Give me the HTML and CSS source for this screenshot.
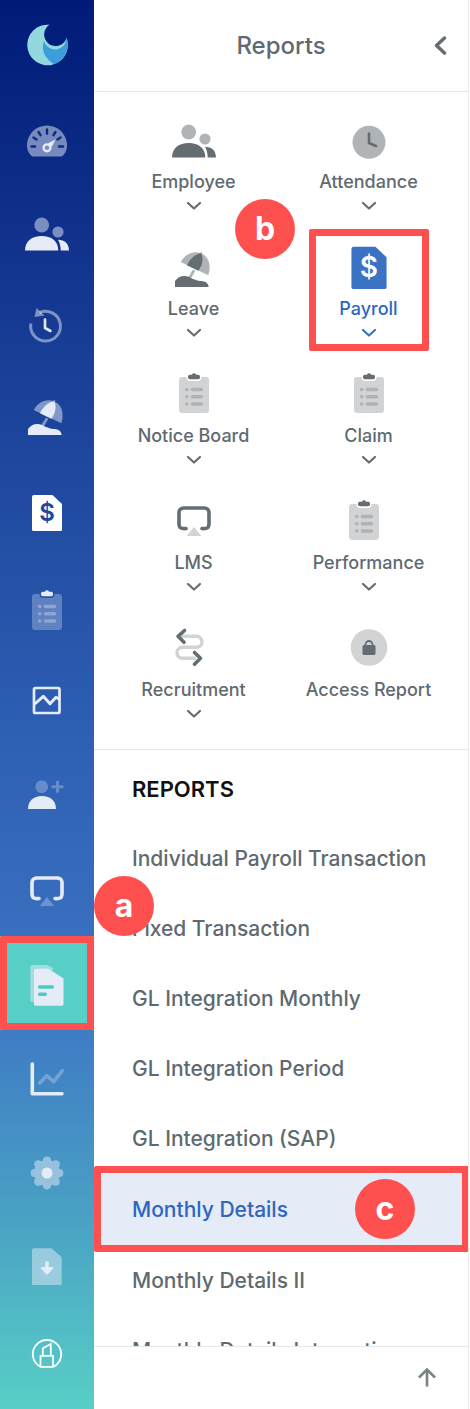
FILE: index.html
```
<!DOCTYPE html>
<html lang="en">
<head>
  <meta charset="UTF-8">
  <meta name="viewport" content="width=device-width, initial-scale=1.0">
  <title>Reports</title>
  <link rel="stylesheet" href="styles.css">
</head>
<body>
  <!-- Shared icons -->
  <svg class="sprite" aria-hidden="true">
    <g id="people">
      <circle class="soft" cx="18.7" cy="14" r="7.4"/>
      <circle class="soft" cx="35" cy="21" r="5.6"/>
      <path class="solid" d="M2 39.5C2 30 9 25 18.7 25s16.6 5 16.6 14.5z"/>
      <path class="solid" d="M35 28.8c6.500 0 11 4 11 10.700h-8.300c0-4.200-1-7.700-2.700-10.700z"/>
    </g>
    <g id="beach">
      <path class="soft" d="M23 24.500l2.300 1.200-4.500 8-2.800-1.200z"/>
      <path class="soft" d="M10.700 17C16 8 24 6 30.500 8l.5-1.200 1.300.6-.3 1.300C39 12 41.500 21 38.300 30.300z"/>
      <path class="solid" d="M17 20.200C20 13.500 26 8.800 31 8.200c3 5 1.500 12-2.700 17.600z"/>
      <path class="solid" d="M5 42v-6c3-4.500 9-6.500 14-4 5 2.500 7.500 3.800 12.500 4 4 .2 6.700 2 7.200 6z"/>
    </g>
    <path id="bill" class="solid" d="M11 6h18.500L39 15v25.500a1.500 1.500 0 0 1-1.500 1.500h-27A1.500 1.500 0 0 1 9 40.500V8a2 2 0 0 1 2-2z"/>
    <g id="clipboard">
      <path class="sheet" d="M12 8h4.500a4 4 0 0 0 4 4h7a4 4 0 0 0 4-4H36a3 3 0 0 1 3 3v30a3 3 0 0 1-3 3H12a3 3 0 0 1-3-3V11a3 3 0 0 1 3-3z"/>
      <path class="rows" d="M16.700 20.500h.1M22.500 20.500h9M16.700 27.800h.1M22.500 27.800h9M16.700 35h.1M22.500 35h9"/>
      <path class="clip" d="M19.800 5.800H22a2.100 2.100 0 0 1 4 0h2.200a1.800 1.800 0 0 1 1.800 1.800v.8a1.800 1.800 0 0 1-1.800 1.800h-8.400A1.800 1.800 0 0 1 18 8.400v-.8a1.800 1.800 0 0 1 1.800-1.800z"/>
    </g>
    <g id="screen">
      <path class="line" stroke-width="3.600" d="M16 33.500c-5 .5-7-.5-7-5V17.500a4.500 4.500 0 0 1 4.500-4.500h21a4.500 4.500 0 0 1 4.500 4.500v11c0 4.500-2 5.500-7 5"/>
      <path class="faint" d="M24 32l7.300 9H16.700z"/>
    </g>
    <path id="caret" class="line" stroke-width="2.200" d="M2 4l6 5.500L14 4"/>
  </svg>

  <div class="app">
    <nav class="sidebar" aria-label="Main">
      <a class="logo" href="#" aria-label="Home">
        <svg class="icon" viewBox="0 0 48 48">
          <path fill="#93d8de" d="M26.500 3.800A20.300 20.300 0 1 0 43.600 17 11.500 11.500 0 1 1 26.500 3.800z"/>
          <path fill="#3b9edb" d="M21 20a11.500 11.500 0 0 0 22.600-3A20.300 20.300 0 0 1 31 43.200C21 37 18 28 21 20z"/>
        </svg>
      </a>
      <a class="nav-item" href="#" aria-label="Dashboard">
        <svg class="icon" viewBox="0 -5 48 48">
          <path class="soft" d="M9.500 38.500C6 36.500 4 32 4 27.500a20 20 0 0 1 40 0c0 4.500-2 9-5.500 11z"/>
          <path class="ticks" d="M8.500 28.500h3.500M36 28.500h4M10.500 19.500l3 2M15.500 14l2 3.200M24 11.500v4M32.500 14l-2 3.200M37.500 19.500l-3 2"/>
          <path class="solid" d="M32.500 21.500l-3.600 7.200-3.800-3.500z"/>
          <circle class="line" stroke-width="2.400" cx="24" cy="29.800" r="3.400"/>
        </svg>
      </a>
      <a class="nav-item" href="#" aria-label="Employee">
        <svg class="icon" viewBox="0 -4 48 48"><use href="#people"/></svg>
      </a>
      <a class="nav-item" href="#" aria-label="Attendance">
        <svg class="icon" viewBox="0 0 48 48">
          <path class="line half" stroke-width="3" d="M7.900 22.500A14.900 14.900 0 1 0 16.500 11.600"/>
          <path class="soft" d="M13.500 7l8 7.500-10 1.500z"/>
          <path class="line" stroke-width="2.600" d="M22 18.500v8.500l5.500 3"/>
        </svg>
      </a>
      <a class="nav-item" href="#" aria-label="Leave">
        <svg class="icon" viewBox="0 2 48 48"><use href="#beach"/></svg>
      </a>
      <a class="nav-item current" href="#" aria-label="Payroll">
        <svg class="icon" viewBox="0 0 48 48">
          <use href="#bill"/>
          <text class="currency" x="24" y="32" text-anchor="middle">$</text>
        </svg>
      </a>
      <a class="nav-item" href="#" aria-label="Claim">
        <svg class="icon" viewBox="0 -3 48 48"><use href="#clipboard"/></svg>
      </a>
      <a class="nav-item" href="#" aria-label="Performance">
        <svg class="icon" viewBox="0 0 48 48">
          <rect class="line" stroke-width="2.700" x="11" y="11" width="25.500" height="25" rx="1.500"/>
          <path class="line" stroke-width="3" d="M12.300 26.500l8-7.200 6.700 7.500 6-6.500 3 1.700"/>
        </svg>
      </a>
      <a class="nav-item" href="#" aria-label="Recruitment">
        <svg class="icon" viewBox="0 0 48 48">
          <circle class="faint" cx="18.700" cy="15.700" r="6.400"/>
          <path class="line dim" stroke-width="3" d="M34.500 11v9.500M29.700 15.700h9.500"/>
          <path class="solid" d="M5 38c0-8 5.500-13 14-13s14 5 14 13z"/>
        </svg>
      </a>
      <a class="nav-item" href="#" aria-label="LMS">
        <svg class="icon" viewBox="0 0 48 48"><use href="#screen"/></svg>
      </a>
      <div class="nav-item active">
        <a class="nav-link" href="#" aria-label="Reports">
          <svg class="icon" viewBox="0 0 48 48">
            <path class="soft" d="M9 6h15.500l6 3.500L11 43H9a1.700 1.700 0 0 1-1.700-1.700V7.700A1.700 1.700 0 0 1 9 6z"/>
            <path class="solid" d="M12.500 9.700h13L40.500 19.500v25.700a1.500 1.500 0 0 1-1.500 1.500H12.500a1.500 1.500 0 0 1-1.500-1.500v-34a1.500 1.500 0 0 1 1.500-1.500z"/>
            <path class="teal" d="M16.700 28h12.500M16.700 35.300h5.500"/>
          </svg>
        </a>
        <span class="mark"></span>
        <span class="badge badge-a">a</span>
      </div>
      <a class="nav-item" href="#" aria-label="Analytics">
        <svg class="icon" viewBox="0 0 48 48">
          <path class="line" stroke-width="3.600" d="M9.300 11v29.700H39"/>
          <path class="line dim" stroke-width="3.600" d="M16.700 30l7-7.300 7 6 8.600-11"/>
        </svg>
      </a>
      <a class="nav-item" href="#" aria-label="Settings">
        <svg class="icon" viewBox="0 -2 48 48">
          <g opacity=".5" fill="#e6ebf8">
            <circle cx="24" cy="24" r="13"/>
            <circle cx="24" cy="11.700" r="4.100"/>
            <circle cx="32.700" cy="15.300" r="4.100"/>
            <circle cx="36.300" cy="24" r="4.100"/>
            <circle cx="32.700" cy="32.700" r="4.100"/>
            <circle cx="24" cy="36.300" r="4.100"/>
            <circle cx="15.300" cy="32.700" r="4.100"/>
            <circle cx="11.700" cy="24" r="4.100"/>
            <circle cx="15.300" cy="15.300" r="4.100"/>
          </g>
          <circle class="solid" cx="24" cy="24" r="5.500"/>
        </svg>
      </a>
      <a class="nav-item" href="#" aria-label="Downloads">
        <svg class="icon" viewBox="0 0 48 48">
          <path class="soft" d="M11 7.300h17.500l10.200 8.900v26.300a1.500 1.500 0 0 1-1.500 1.500H10.500A1.500 1.500 0 0 1 9 42.500V9.300a2 2 0 0 1 2-2z"/>
          <path class="solid" d="M22.200 22a1.800 1.800 0 0 1 3.600 0v4h3.400c1 0 1.300 1 .7 1.700l-5 5.600c-.5.600-1.300.600-1.800 0l-5-5.600c-.6-.7-.3-1.700.7-1.700h3.400z"/>
        </svg>
      </a>
      <a class="nav-item" href="#" aria-label="Workflow">
        <svg class="icon" viewBox="0 0 48 48">
          <path class="pen" d="M17.500 31.800a14.200 14.200 0 1 1 13 0zM17.500 32V20.800h12.500V32M19.800 20.500v-7.200l8-4.300v11.500"/>
        </svg>
      </a>
    </nav>

    <main class="panel">
      <header class="panel-head">
        <h1 class="title">Reports</h1>
        <button class="back" type="button" aria-label="Back">
          <svg width="24" height="24" viewBox="0 0 24 24"><path class="line" stroke-width="3.500" d="M16.500 4L8.500 11.500l8 7.500"/></svg>
        </button>
      </header>

      <section class="modules">
        <button class="module" type="button">
          <svg class="icon" viewBox="0 0 48 48"><use href="#people"/></svg>
          <span class="label">Employee</span>
          <svg class="caret" viewBox="0 0 16 14"><use href="#caret"/></svg>
        </button>
        <button class="module" type="button">
          <svg class="icon" viewBox="0 0 48 48">
            <circle class="soft" cx="24" cy="24.300" r="16.500"/>
            <path class="line" stroke-width="2.600" stroke-linejoin="miter" d="M24 15.500V25l7 3"/>
          </svg>
          <span class="label">Attendance</span>
          <svg class="caret" viewBox="0 0 16 14"><use href="#caret"/></svg>
        </button>
        <button class="module" type="button">
          <svg class="icon" viewBox="0 0 48 48"><use href="#beach"/></svg>
          <span class="label">Leave</span>
          <svg class="caret" viewBox="0 0 16 14"><use href="#caret"/></svg>
        </button>
        <div class="module-wrap">
          <button class="module selected" type="button">
            <svg class="icon" viewBox="3.500 4.500 41 41">
              <use href="#bill"/>
              <text class="currency" x="24" y="32" text-anchor="middle">$</text>
            </svg>
            <span class="label">Payroll</span>
            <svg class="caret" viewBox="0 0 16 14"><use href="#caret"/></svg>
          </button>
          <span class="mark"></span>
          <span class="badge badge-b">b</span>
        </div>
        <button class="module" type="button">
          <svg class="icon" viewBox="0 3 48 48"><use href="#clipboard"/></svg>
          <span class="label">Notice Board</span>
          <svg class="caret" viewBox="0 0 16 14"><use href="#caret"/></svg>
        </button>
        <button class="module" type="button">
          <svg class="icon" viewBox="0 3 48 48"><use href="#clipboard"/></svg>
          <span class="label">Claim</span>
          <svg class="caret" viewBox="0 0 16 14"><use href="#caret"/></svg>
        </button>
        <button class="module" type="button">
          <svg class="icon" viewBox="0 4 48 48"><use href="#screen"/></svg>
          <span class="label">LMS</span>
          <svg class="caret" viewBox="0 0 16 14"><use href="#caret"/></svg>
        </button>
        <button class="module" type="button">
          <svg class="icon" viewBox="5 3 48 48"><use href="#clipboard"/></svg>
          <span class="label">Performance</span>
          <svg class="caret" viewBox="0 0 16 14"><use href="#caret"/></svg>
        </button>
        <button class="module" type="button">
          <svg class="icon" viewBox="0 0 48 48">
            <path class="route" d="M11 10.300h15.500a5.500 5.500 0 0 1 0 11H12.500a5.500 5.500 0 0 0 0 11H26"/>
            <path class="line" stroke-width="3.600" d="M14.500 4.500l-6.500 5.800 6 6M24.500 26.500l6 5.800-6 6"/>
          </svg>
          <span class="label">Recruitment</span>
          <svg class="caret" viewBox="0 0 16 14"><use href="#caret"/></svg>
        </button>
        <button class="module" type="button">
          <svg class="icon" viewBox="0 0 48 48">
            <circle class="faint" cx="24" cy="21.500" r="18.300"/>
            <rect class="solid" x="17.500" y="19" width="13" height="10" rx="1.500"/>
            <path class="line" stroke-width="1.800" d="M20.500 20v-1.500a3.500 3.500 0 0 1 7 0V20"/>
          </svg>
          <span class="label">Access Report</span>
        </button>
      </section>

      <section class="reports">
        <h2 class="heading">REPORTS</h2>
        <ul class="list">
          <li><a class="report" href="#">Individual Payroll Transaction</a></li>
          <li><a class="report" href="#">Fixed Transaction</a></li>
          <li><a class="report" href="#">GL Integration Monthly</a></li>
          <li><a class="report" href="#">GL Integration Period</a></li>
          <li><a class="report" href="#">GL Integration (SAP)</a></li>
          <li class="picked">
            <a class="report" href="#">Monthly Details</a>
            <span class="mark"></span>
            <span class="badge badge-c">c</span>
          </li>
          <li><a class="report" href="#">Monthly Details II</a></li>
          <li><a class="report" href="#">Monthly Details Integration</a></li>
        </ul>
      </section>

      <footer class="panel-foot">
        <button class="top" type="button" aria-label="Back to top">
          <svg width="24" height="24" viewBox="0 0 24 24"><path d="M12 20.500V3.500M4 11.500l8-8 8 8"/></svg>
        </button>
      </footer>
    </main>
  </div>
</body>
</html>
```
FILE: styles.css
```
* {
  box-sizing: border-box;
}
body {
  margin: 0;
  background: #fff;
  color: #5f6a70;
  font-family: Inter, "Liberation Sans", sans-serif;
}
button {
  padding: 0;
  border: 0;
  background: none;
  color: inherit;
  font: inherit;
  cursor: pointer;
}
a {
  color: inherit;
  text-decoration: none;
}
.sprite {
  position: absolute;
  width: 0;
  height: 0;
}
.app {
  display: flex;
  height: 100vh;
  padding-right: 1px;
}

/* Icon parts */
.icon {
  display: block;
  width: 48px;
  height: 48px;
  flex: none;
}
.solid,
.clip {
  fill: var(--solid);
}
.soft {
  fill: var(--soft);
}
.faint,
.sheet {
  fill: var(--faint);
}
.line {
  fill: none;
  stroke: var(--solid);
  stroke-linecap: round;
  stroke-linejoin: round;
}
.half {
  stroke: var(--soft);
  stroke-linecap: butt;
}
.dim {
  stroke: var(--faint);
}
.rows {
  fill: none;
  stroke: var(--rows);
  stroke-width: 3.6;
  stroke-linecap: round;
}
.route {
  fill: none;
  stroke: var(--faint);
  stroke-width: 3.4;
}
.currency {
  fill: var(--hole);
  font-size: 24px;
  font-weight: 600;
}

/* Sidebar */
.sidebar {
  --solid: #e6ebf8;
  --soft: rgba(230, 235, 248, .5);
  --faint: rgba(230, 235, 248, .3);
  --rows: rgba(230, 235, 248, .35);
  --hole: #1f479e;
  position: relative;
  z-index: 1;
  flex: none;
  width: 94px;
  background: linear-gradient(#001a78, #193f97 26%, #2e60b4 53%, #3a70c0 67%, #3f7ec4 74%, #4aa3c4 87%, #58cfc6);
}
.logo,
.nav-item,
.nav-link {
  display: flex;
  align-items: center;
  justify-content: center;
  height: 94px;
}
.logo {
  height: 90px;
}
.current {
  --solid: #fff;
}
.active {
  position: relative;
  background: #58cfc6;
}
.ticks {
  fill: none;
  stroke: #0a2a84;
  stroke-width: 2.4;
  stroke-linecap: round;
}
.teal {
  fill: none;
  stroke: #4ccbc2;
  stroke-width: 3.6;
  stroke-linecap: round;
}
.pen {
  fill: none;
  stroke: #fff;
  stroke-width: 1.8;
}

/* Panel */
.panel {
  --solid: #646d72;
  --soft: #b0b4b7;
  --faint: #d2d3d5;
  --rows: #b0b3b5;
  --hole: #fff;
  display: flex;
  flex: 1;
  flex-direction: column;
  min-width: 0;
  border-right: 1px solid #e6e8ea;
}
.panel-head {
  display: grid;
  grid-template-columns: 1fr auto 1fr;
  align-items: center;
  height: 92px;
  padding: 0 16px;
  border-bottom: 1px solid #e6e8ea;
}
.title {
  grid-column: 2;
  margin: 0;
  font-size: 24px;
  font-weight: 500;
  line-height: 32px;
}
.back {
  justify-self: end;
  height: 24px;
}
.modules {
  display: grid;
  grid-template-columns: 1fr 1fr;
  grid-auto-rows: 100px;
  row-gap: 27px;
  padding: 26px 12px 23px;
  border-bottom: 1px solid #e6e8ea;
}
.module {
  display: flex;
  flex-direction: column;
  align-items: center;
  width: 100%;
}
.module-wrap {
  position: relative;
}
.selected {
  --solid: #3a72c4;
  color: #2c66c0;
}
.label {
  margin-top: 5px;
  font-size: 18px;
  font-weight: 500;
  line-height: 22px;
}
.caret {
  width: 16px;
  height: 14px;
  margin-top: 6px;
}
.reports {
  flex: 1;
  min-height: 0;
  overflow: hidden;
}
.heading {
  margin: 26px 38px 21px;
  color: #111;
  font-size: 22px;
  font-weight: 600;
  line-height: 26px;
}
.list {
  margin: 0;
  padding: 0;
  list-style: none;
}
.report {
  display: flex;
  align-items: center;
  height: 70px;
  padding: 0 38px;
  font-size: 21px;
  font-weight: 500;
  white-space: nowrap;
}
.picked {
  position: relative;
  background: #e6ebf8;
  color: #2c66c0;
}
.picked .report {
  height: 72px;
}
.panel-foot {
  display: flex;
  align-items: center;
  justify-content: flex-end;
  height: 63px;
  padding: 0 29px;
  border-top: 1px solid #e6e8ea;
}
.top {
  height: 24px;
}
.top path {
  fill: none;
  stroke: #7b8387;
  stroke-width: 2.6;
}

/* Step marks */
.mark {
  position: absolute;
  border: 7px solid #ff5050;
  border-radius: 2px;
  pointer-events: none;
}
.active .mark {
  inset: 0;
}
.module-wrap .mark {
  inset: -16px 27px -6px 28px;
}
.picked .mark {
  inset: -7px -1px -7px 0;
}
.badge {
  position: absolute;
  width: 60px;
  height: 60px;
  border-radius: 50%;
  background: #ff5050;
  color: #fff;
  font-size: 32px;
  font-weight: 700;
  line-height: 60px;
  text-align: center;
}
.badge-a {
  top: -60px;
  left: 94px;
}
.badge-b {
  top: -46px;
  left: -46px;
}
.badge-c {
  top: 6px;
  right: 53px;
}
```
